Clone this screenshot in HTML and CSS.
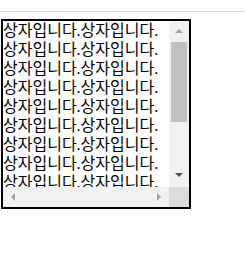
FILE: index.html
```html
<!DOCTYPE html>
<html lang="ko">
<head>
    <meta charset="UTF-8">
    <title>상자</title>
    <link rel="stylesheet" href="styles.css">
</head>
<body>
    <div class="rule"></div>

    <!-- Scroll box with classic scrollbars -->
    <div class="box">
        <div class="box-text">상자입니다.상자입니다.상자입니다.상자입니다.상자입니다.상자입니다.상자입니다.상자입니다.상자입니다.상자입니다.상자입니다.상자입니다.상자입니다.상자입니다.상자입니다.상자입니다.상자입니다.상자입니다.상자입니다.상자입니다.상자입니다.상자입니다.상자입니다.상자입니다.상자입니다.상자입니다.상자입니다.상자입니다.상자입니다.상자입니다.상자입니다.상자입니다.</div>

        <div class="vbar">
            <div class="sb-btn"><span class="arrow arrow-up"></span></div>
            <div class="vtrack"><div class="vthumb"></div></div>
            <div class="sb-btn"><span class="arrow arrow-down"></span></div>
        </div>

        <div class="hbar">
            <div class="sb-btn"><span class="arrow arrow-left"></span></div>
            <div class="htrack"></div>
            <div class="sb-btn"><span class="arrow arrow-right"></span></div>
        </div>

        <div class="corner"></div>
    </div>
</body>
</html>
```

FILE: styles.css
```css
* {
    box-sizing: border-box;
}

body {
    margin: 0;
    background: #ffffff;
    font-family: "Liberation Serif", "Noto Sans CJK KR", serif;
    color: #000000;
}

.rule {
    margin-top: 11px;
    height: 1px;
    background: #dadada;
}

/* Scroll box */
.box {
    margin: 7px 0 0 1px;
    width: 190px;
    height: 190px;
    border: 2px solid #000000;
    display: grid;
    grid-template-columns: 166px 20px;
    grid-template-rows: 166px 20px;
}

.box-text {
    overflow: hidden;
    font-size: 16px;
    line-height: 19px;
}

/* Scrollbars */
.vbar,
.hbar {
    display: flex;
    background: #f1f1f1;
}

.vbar {
    flex-direction: column;
}

.sb-btn {
    width: 20px;
    height: 20px;
    flex-shrink: 0;
    display: flex;
    align-items: center;
    justify-content: center;
}

.vtrack,
.htrack {
    flex: 1;
}

.vthumb {
    margin: 1px 2px 0;
    height: 80px;
    background: #c1c1c1;
}

.corner {
    background: #dcdcdc;
}

.arrow {
    width: 0;
    height: 0;
    border: 4px solid transparent;
}

.arrow-up {
    border-top-width: 0;
    border-bottom-color: #a3a3a3;
}

.arrow-down {
    border-bottom-width: 0;
    border-top-color: #505050;
    margin-top: -4px;
}

.arrow-left {
    border-left-width: 0;
    border-right-color: #a3a3a3;
}

.arrow-right {
    border-right-width: 0;
    border-left-color: #a3a3a3;
}
```
